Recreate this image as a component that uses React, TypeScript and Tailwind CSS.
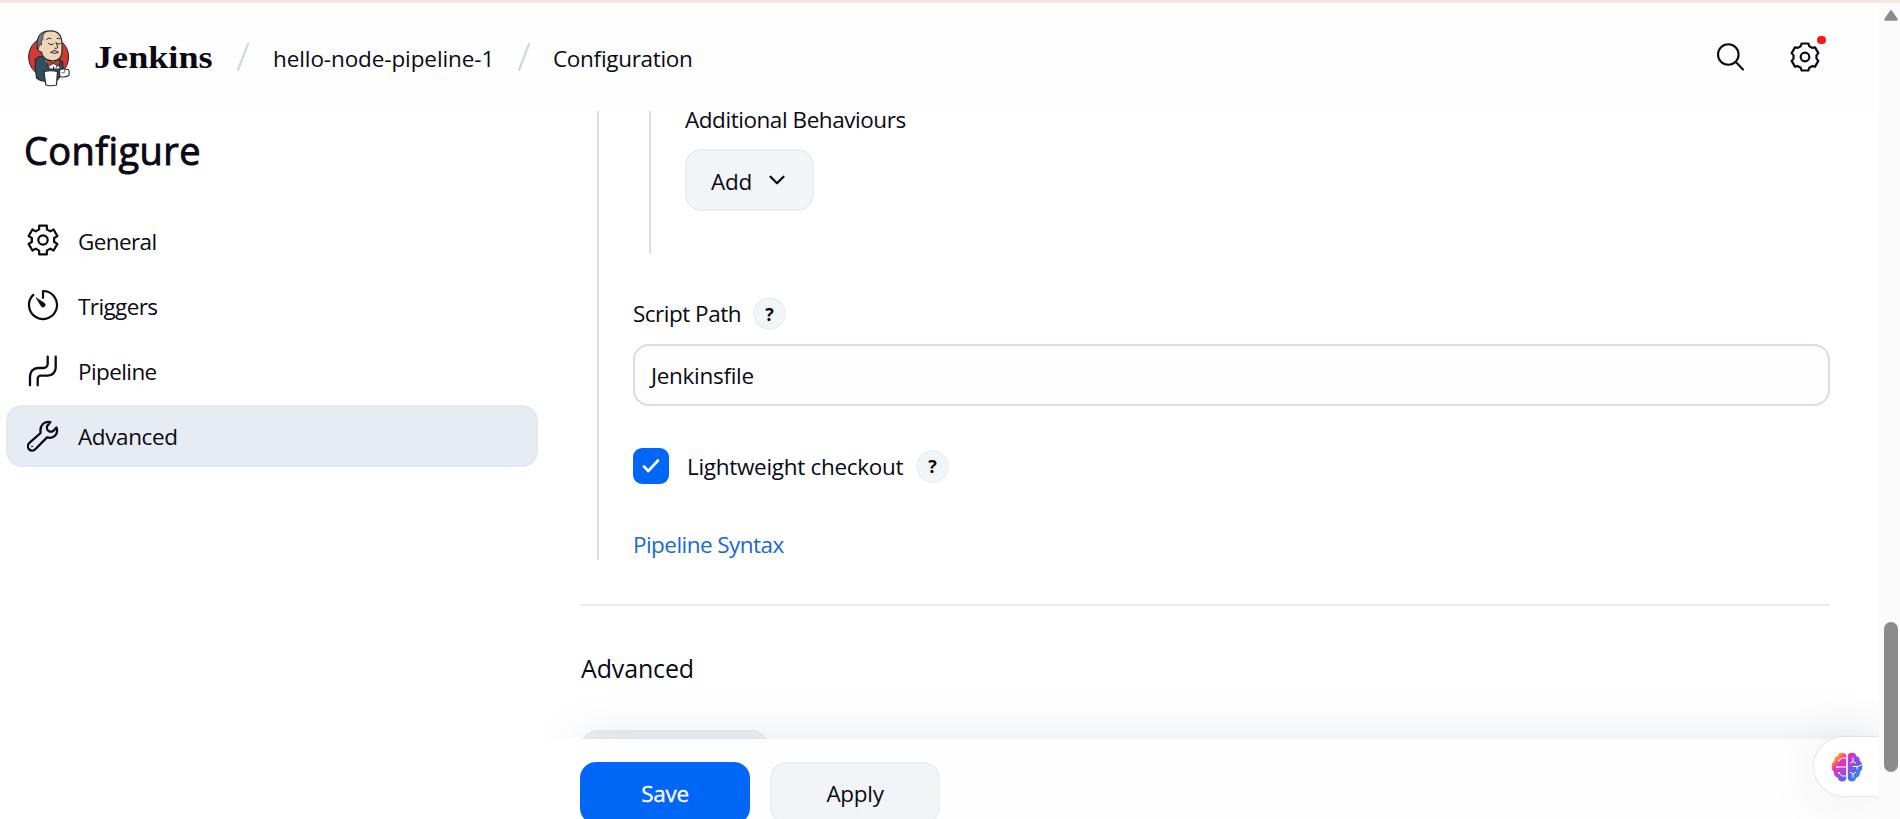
import type { ReactNode } from "react";
import { ChevronDown } from "lucide-react";

function gearPath(cx: number, cy: number, outer: number, inner: number, tip: number, root: number) {
  const at = (r: number, a: number) => `${(cx + r * Math.sin(a)).toFixed(2)} ${(cy - r * Math.cos(a)).toFixed(2)}`;
  let d = "";
  for (let i = 0; i < 6; i++) {
    const a = (i * Math.PI) / 3;
    d += `${i === 0 ? "M" : "L"}${at(inner, a - root)}L${at(outer, a - tip)}L${at(outer, a + tip)}L${at(inner, a + root)}`;
  }
  return d + "Z";
}

function Gear({ soft = false }: { soft?: boolean }) {
  return (
    <svg width="32" height="32" viewBox="0 0 32 32" fill="none" stroke="currentColor" strokeWidth="2.2" strokeLinejoin="round">
      <path d={soft ? gearPath(16, 16, 13.9, 11.6, 0.24, 0.38) : gearPath(16, 16, 14.9, 11.3, 0.26, 0.35)} />
      <circle cx="16" cy="16" r={soft ? 4.3 : 4.7} />
    </svg>
  );
}

function Triggers() {
  return (
    <svg width="32" height="32" viewBox="0 0 32 32" fill="none" stroke="currentColor" strokeWidth="2.2" strokeLinecap="round" strokeLinejoin="round">
      <path d="M16 8.8V2a14 14 0 1 1-9.7 3.9" />
      <path d="M9.2 9l5.200 8.400a2.200 2.200 0 1 0 3.200-3.100z" fill="currentColor" strokeWidth=".6" />
    </svg>
  );
}

function Pipeline() {
  return (
    <svg width="32" height="32" viewBox="0 0 32 32" fill="none" stroke="currentColor" strokeWidth="2.3" strokeLinecap="round">
      <path d="M3 30.3V21a8 8 0 0 1 8-8h5.500a4.200 4.200 0 0 0 4.200-4.200V1.700" />
      <path d="M10.700 30.300V23.700a3 3 0 0 1 3-3h7a8 8 0 0 0 8-8V1.700" />
    </svg>
  );
}

function Wrench() {
  return (
    <svg width="32" height="32" viewBox="0 0 32 32" fill="none" stroke="currentColor" strokeWidth="2.3" strokeLinejoin="round" strokeLinecap="round">
      <path d="M13.600 13C12.500 5.500 17 .8 23.300 2.200L20 6.200q-.6 3.600 1.500 4.700 2.400 1.500 4.700.1L29.500 7.500C31.700 14 27 19.200 20 17.400L8.300 29.300a4.300 4.300 0 0 1-6.200-6.100z" />
      <circle cx="5" cy="26.500" r=".6" fill="currentColor" strokeWidth=".6" />
    </svg>
  );
}

function Logo() {
  return (
    <svg width="42" height="57" viewBox="0 0 42 57" stroke="#262b31" strokeLinejoin="round" className="mt-[2px] shrink-0">
      <ellipse cx="20.600" cy="27" rx="20" ry="20.300" fill="#d33833" strokeWidth="1" />
      <path d="M11.500 26.500L7.500 29 7.200 37 8.500 48q4 3.500 9 3l12-1 6-8-1-10.500-7-3.500z" fill="#2f4f5e" strokeWidth="1.200" />
      <path d="M17 30l3 9h12l-1.500-10z" fill="#eef1f2" strokeWidth=".8" />
      <path d="M17 30l-1 4 5 6 1.500-1zM31 29.500l1 4-5 6z" fill="#2f4f5e" stroke="none" />
      <path d="M9.500 15C8.500 5 14.500.8 22.500.8 31 .8 34 7 34 14.500c0 5 1 10-2.500 14-3 3-9 3-13.500.5-3-2-4-4-4.500-7-3 0-5-3.500-4-7z" fill="#f0d6b7" strokeWidth="1.200" />
      <path d="M9.500 13.500C9 6 13 2 18.500 1.200 15 4 14.500 6 14.800 9.500 13 10.500 13.500 14 13.500 15l-2-.5-1.200 4.500C8.800 17.500 9 15.500 9.500 13.500z" fill="#74787d" strokeWidth=".8" />
      <path d="M18.500 9.500q2.500-2.500 4.500-1M29 8.500q2-1 3 .3M20.500 13.500q2.500 2.500 5 .5M29 13.500q2 1.500 3.500 0M28 12.500l1.800 5q-1.500 1.500-3 .8M23 22.500q1.500-2.500 4-1.800 2.500.3 3.500 1.800-4 1.800-7.500 0z" fill="none" strokeWidth="1" strokeLinecap="round" />
      <path d="M19 29.500l6.200 3L31.800 29l-.3 7-6.300-2.500-5.700 3z" fill="#d33833" strokeWidth=".9" />
      <path d="M25.500 36.500v4" strokeWidth="1" />
      <path d="M31.500 40.500q1-2 4-1.500l4.800.5q1.500 2 .5 6-4 2.500-9 1z" fill="#fff" strokeWidth="1.100" />
      <path d="M33.500 42.500l3 .5M36.500 39.500l.5 3" strokeWidth=".7" />
      <path d="M16 41.500q7-1.500 13.500 0L28.500 55q-6 1.500-10.700 0z" fill="#fff" strokeWidth="1.200" />
    </svg>
  );
}

function Brain() {
  return (
    <svg width="32" height="30" viewBox="0 0 32 30">
      <defs>
        <linearGradient id="lobe" gradientUnits="userSpaceOnUse" x1="4" y1="3" x2="29" y2="26">
          <stop offset="0" stopColor="#ff9a2a" />
          <stop offset=".08" stopColor="#ff9a2a" />
          <stop offset=".26" stopColor="#ee2fa6" />
          <stop offset=".5" stopColor="#a04ae4" />
          <stop offset=".75" stopColor="#5a62f0" />
          <stop offset="1" stopColor="#1aa0ff" />
        </linearGradient>
      </defs>
      <path
        fill="url(#lobe)"
        d="M15.200 3Q14 .5 10.500.8 7 1 6.800 4 3 4.500 3.200 9 .5 10.500.8 14.500.3 18 3 20q-.5 4.500 4 6 .5 3.500 4.200 3.500 3 0 4-2.500zM16.800 3Q18 .5 21.500.8 25 1 25.200 4q3.800.5 3.600 5 2.700 1.500 2.400 5.500.5 3.500-2.200 5.500.5 4.500-4 6-.5 3.500-4.200 3.500-3 0-4-2.500z"
      />
      <g stroke="#fff" strokeWidth="1" fill="none" strokeLinecap="round">
        <path d="M15 6h-4L8 8.500M15 15H6M15 24h-4l-3-3M22 6v3.500l-2.500 1.500M22 9.500l2.500 1.500M31 12.500l-4 2h-5M26 14.500v2.500M22 25v-3l-2.500-1.500M22 22l2.500-1.500" />
        <circle cx="8" cy="8.500" r=".6" fill="#fff" />
        <circle cx="6" cy="15" r=".6" fill="#fff" />
        <circle cx="8" cy="21" r=".6" fill="#fff" />
      </g>
    </svg>
  );
}

function Slash() {
  return (
    <svg width="14" height="30" viewBox="0 0 14 30" className="shrink-0">
      <path d="M12 2L2 28" stroke="#cfd8e3" strokeWidth="2.200" strokeLinecap="round" />
    </svg>
  );
}

function Help() {
  return (
    <button className="flex size-[33px] shrink-0 items-center justify-center rounded-full border-2 border-[#edf1f5] bg-[#f2f5f8] text-[18px] leading-none font-bold">
      ?
    </button>
  );
}

const items: { label: string; icon: ReactNode; active?: boolean }[] = [
  { label: "General", icon: <Gear /> },
  { label: "Triggers", icon: <Triggers /> },
  { label: "Pipeline", icon: <Pipeline /> },
  { label: "Advanced", icon: <Wrench />, active: true },
];

export default function App() {
  return (
    <div className="flex h-[819px] w-[1900px] overflow-hidden bg-white font-['Open_Sans','Noto_Sans',sans-serif] text-[22.5px] leading-[30px] tracking-[-0.3px] text-[#0a0a14]">
      <div className="relative flex w-[1879px] shrink-0 flex-col overflow-hidden">
        <header className="flex h-[111px] shrink-0 flex-col border-t-[3px] border-[#fae3e3] bg-[#fefefe]">
          <div className="flex h-[108px] items-center pl-[28px] whitespace-nowrap">
            <Logo />
            <span className="w-[142px] shrink-0 pl-[24px] font-['Liberation_Serif',serif] text-[32px] font-bold tracking-normal">
              <span className="inline-block origin-left scale-x-[1.13]">Jenkins</span>
            </span>
            <span className="flex w-[61px] shrink-0 pl-[24px]">
              <Slash />
            </span>
            <span className="w-[220px] shrink-0 pt-[3px] tracking-[-0.1px]">hello-node-pipeline-1</span>
            <span className="flex w-[60px] shrink-0 pl-[24px]">
              <Slash />
            </span>
            <span className="grow pt-[3px]">Configuration</span>
            <svg width="30" height="30" viewBox="0 0 30 30" fill="none" stroke="currentColor" strokeWidth="2.1" strokeLinecap="round" className="mr-[43px]">
              <circle cx="12.300" cy="12.500" r="10.300" />
              <path d="M19.800 20l7.200 7.500" />
            </svg>
            <span className="relative mr-[58px]">
              <Gear soft />
              <span className="absolute top-[-5px] right-[-5px] h-[8px] w-[9px] rounded-full bg-[#f8161d]" />
            </span>
          </div>
        </header>
        <div className="flex min-h-0 grow">
          <aside className="w-[580px] shrink-0 pl-[6px]">
            <h1 className="h-[67px] pt-[18px] pl-[18px] text-[38px] leading-[42px] tracking-[0.4px] [-webkit-text-stroke:0.9px_#0a0a14]">Configure</h1>
            <nav className="mt-[31px] flex flex-col gap-[3.3px]">
              {items.map((it) => (
                <a
                  key={it.label}
                  className={
                    it.active
                      ? "flex h-[62px] w-[532px] items-center gap-[19px] rounded-[16px] border-2 border-[#e2e8ed] bg-[#e7ecf3] pl-[19px]"
                      : "flex h-[62px] w-[532px] items-center gap-[19px] pl-[21px]"
                  }
                >
                  {it.icon}
                  <span className={it.active ? "pt-[3px] tracking-[-0.4px]" : "pt-[3px] tracking-[-0.6px]"}>{it.label}</span>
                </a>
              ))}
            </nav>
          </aside>
          <main className="flex w-[1299px] shrink-0 flex-col">
            <section className="ml-[17px] flex h-[449px] shrink-0 flex-col border-l-2 border-[#d9dde6] pl-[34px]">
              <div className="ml-[16px] flex h-[143px] shrink-0 flex-col items-start border-l-2 border-[#d9dde6] pl-[34px]">
                <span className="mt-[-6px] tracking-[-0.45px]">Additional Behaviours</span>
                <button className="mt-[14px] flex h-[62px] w-[129px] items-center rounded-[16px] border-2 border-[#ebeff3] bg-[#f2f5f8] pl-[24px]">
                  <span className="w-[53px] pt-[4px] text-left">Add</span>
                  <ChevronDown size={26} strokeWidth={2.1} />
                </button>
              </div>
              <div className="mt-[43px] flex h-[33px] items-center">
                <span className="w-[120px] whitespace-nowrap tracking-[-0.5px]">Script Path</span>
                <Help />
              </div>
              <div className="mt-[14px] flex h-[62px] w-[1197px] shrink-0 items-center rounded-[16px] border-2 border-[#d9dde6] bg-[#fdfdfd] pt-[2px] pl-[16px]">Jenkinsfile</div>
              <div className="mt-[42px] flex h-[36px] shrink-0 items-center">
                <span className="flex size-[36px] items-center justify-center rounded-[9px] bg-[#0066f5]">
                  <svg width="18" height="16" viewBox="0 0 18 16" fill="none" stroke="#fff" strokeWidth="2.700" strokeLinecap="round" strokeLinejoin="round">
                    <path d="M2 8.500l4.300 4.500L16 2.500" />
                  </svg>
                </span>
                <span className="w-[247px] pt-px pl-[18px] whitespace-nowrap">Lightweight checkout</span>
                <Help />
              </div>
              <a className="mt-[46px] tracking-[-0.55px] text-[#1668dc]">Pipeline Syntax</a>
            </section>
            <hr className="mt-[44px] h-[2px] w-[1250px] shrink-0 border-0 bg-[#e9ecee]" />
            <h2 className="mt-[47px] pl-px text-[25px] leading-[30px] tracking-[-0.15px]">Advanced</h2>
            <div className="mt-[47px] ml-[1px] h-[9px] w-[187px] shrink-0 overflow-hidden">
              <div className="h-[62px] rounded-[16px] border-2 border-[#e9eef2] bg-[#edf1f4]" />
            </div>
            <footer className="flex h-[80px] shrink-0 gap-[20px] bg-[#fefefe] pt-[23px] shadow-[0_0_50px_rgba(90,115,150,0.16)] [clip-path:polygon(-60px_-60px,100%_-60px,100%_100%,0_100%,0_0,-60px_0)]">
              <button className="flex h-[62px] w-[170px] items-center justify-center rounded-[16px] bg-[#0066f5] pt-[2px] text-white [-webkit-text-stroke:0.3px_white]">Save</button>
              <button className="flex h-[62px] w-[170px] items-center justify-center rounded-[16px] border-2 border-[#ebeff3] bg-[#f2f5f8] pt-[2px]">Apply</button>
            </footer>
          </main>
        </div>
        <div className="absolute top-[737px] right-0 flex h-[59px] w-[65px] items-center rounded-l-full bg-white pl-[17px] shadow-[0_2px_60px_rgba(0,0,0,0.08),0_0_2px_rgba(0,0,0,0.2)]">
          <Brain />
        </div>
      </div>
      <div className="flex w-[21px] shrink-0 flex-col border-t-[3px] border-[#fae3e3] bg-[#fbfbfb] pl-[4px]">
        <svg width="16" height="13" viewBox="0 0 16 13" className="mt-[6px]">
          <path d="M8 2.500L13.500 10.500h-11z" fill="#8b8b8b" stroke="#8b8b8b" strokeWidth="2.500" strokeLinejoin="round" />
        </svg>
        <div className="mt-[600px] ml-[1px] h-[150px] w-[14px] rounded-full bg-[#8b8b8b]" />
      </div>
    </div>
  );
}
